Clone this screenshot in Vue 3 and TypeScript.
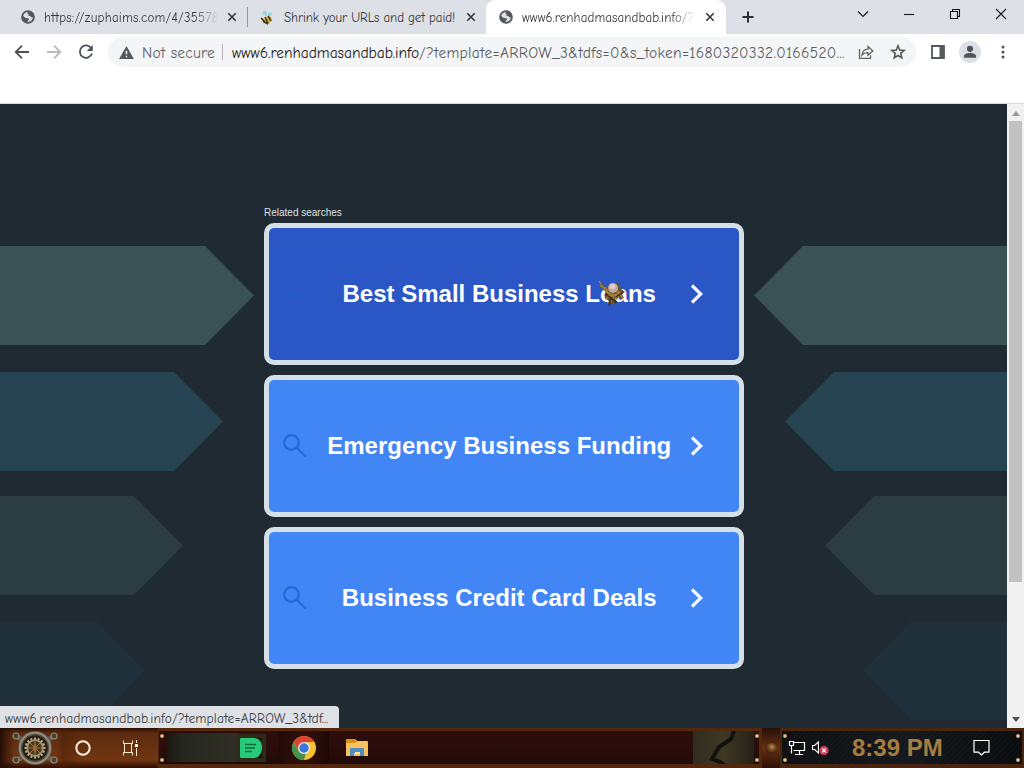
<script setup lang="ts">
interface Tab { title: string; icon: 'globe' | 'bee'; kind: string }
const tabs: Tab[] = [
  { title: 'https://zuphaims.com/4/35578', icon: 'globe', kind: 'first' },
  { title: 'Shrink your URLs and get paid!', icon: 'bee', kind: 'second' },
  { title: 'www6.renhadmasandbab.info/?', icon: 'globe', kind: 'active' },
]
const cards = [
  { label: 'Best Small Business Loans', hover: true },
  { label: 'Emergency Business Funding', hover: false },
  { label: 'Business Credit Card Deals', hover: false },
]
const arrows = [
  { width: 254, color: '#3b5254' },
  { width: 223, color: '#264351' },
  { width: 183, color: '#2b3d41' },
  { width: 145, color: '#1f303b' },
]
const teeth = Array.from({ length: 16 }, (_, i) => i * 22.5)
</script>

<template>
  <div class="screen">
    <header class="tabstrip">
      <div v-for="t in tabs" :key="t.title" class="tab" :class="t.kind">
        <svg v-if="t.icon === 'globe'" class="fav" viewBox="0 0 14 14">
          <circle cx="7" cy="7" r="5.9" fill="#dde0e5" stroke="#54575c" stroke-width="1.9" />
          <path d="M1.5 5.5 4.6 8l2.8.3.8 1.3-1.5 1.2v1.7C3.3 12.5 1 9.5 1.5 5.5ZM7 1.2l-.8 2L7.8 4 7 5.6l2.3.3.8 1.4 2.6.2C13.2 3.8 10.5.8 7 1.2Z" fill="#54575c" />
        </svg>
        <svg v-else class="fav bee" viewBox="0 0 14 14">
          <path d="M3 0c4-1 5 3 4 5C4 5 2 2 3 0M8 2c3-2 5 0 3 3L8 6Z" fill="#9bd5df" />
          <path d="M1 7 5 8l1-2 5-.5L12 9l-3 4-5-.5Z" fill="#e9b72c" />
          <path d="m1 7 4 4M5 6l3 6M8 5l3 5M3 10l5 3" stroke="#39301d" stroke-width="1.5" />
        </svg>
        <span class="tab-title">{{ t.title }}</span>
        <svg class="close" viewBox="0 0 10 10"><path d="m1.3 1.3 7.4 7.4m0-7.4L1.3 8.7" /></svg>
      </div>
      <svg class="plus" viewBox="0 0 12 12"><path d="M6 .5v11M.5 6h11" /></svg>
      <div class="controls">
        <svg width="12" height="12" viewBox="0 0 12 12"><path d="m1 3.5 5 5 5-5" /></svg>
        <svg width="12" height="12" viewBox="0 0 12 12"><path d="M1 6.5h10" /></svg>
        <svg width="12" height="12" viewBox="0 0 12 12"><path d="M1.5 3.5h7v7h-7zM3.5 3.5v-2h7v7h-2" /></svg>
        <svg width="12" height="12" viewBox="0 0 12 12"><path d="m1 1 10 10m0-10L1 11" /></svg>
      </div>
    </header>

    <nav class="toolbar">
      <svg class="nav back" viewBox="0 0 16 16"><path d="M15 8H2m6-6.3L1.7 8 8 14.3" /></svg>
      <svg class="nav fwd" viewBox="0 0 16 16"><path d="M1 8h13M8 1.7 14.3 8 8 14.3" /></svg>
      <svg class="nav reload" viewBox="0 0 16 16"><path d="M13.2 4.1A6.2 6.2 0 1 0 14 9.5" /><path d="M14.8 1v6H8.8Z" class="solid" /></svg>
      <div class="omnibox">
        <svg class="warn" viewBox="0 0 16 14"><path d="M8 0 16 14H0Z" fill="#55585c" /><path d="M8 5v4m0 1.4v1.8" stroke="#f1f3f4" stroke-width="1.6" /></svg>
        <span class="insecure">Not secure</span>
        <i class="sep"></i>
        <span class="url"><b>www6.renhadmasandbab.info</b><span class="path">/?template=ARROW_3&amp;tdfs=0&amp;s_token=1680320332.0166520...</span></span>
        <svg class="share" viewBox="0 0 16 16"><path d="M1.5 5v9.3h11v-3M4 11c.5-4 2.4-5.7 6-5.8V2.5L14.8 7 10 11V8.6C7.2 8.5 5.4 9.2 4 11Z" /></svg>
        <svg class="star" viewBox="0 0 16 16"><path d="m8 1.8 1.7 4.2 4.5.4-3.4 3 1 4.4L8 11.5l-3.8 2.3 1-4.4-3.4-3 4.5-.4Z" /></svg>
      </div>
      <svg class="panel" viewBox="0 0 14 14"><path d="M1 1h12v12H1z" fill="none" stroke="#55585c" stroke-width="1.8" /><path d="M8.5 1H13v12H8.5z" fill="#55585c" /></svg>
      <svg class="avatar" viewBox="0 0 22 22"><circle cx="11" cy="11" r="11" fill="#dce0e6" /><circle cx="11" cy="7.8" r="3.1" fill="#505459" /><path d="M5 16.7v-1.5c0-2 3-3.2 6-3.2s6 1.2 6 3.2v1.5Z" fill="#505459" /></svg>
      <svg class="dots" viewBox="0 0 4 14"><circle cx="2" cy="2" r="1.5" /><circle cx="2" cy="7" r="1.5" /><circle cx="2" cy="12" r="1.5" /></svg>
    </nav>
    <div class="bookmarks"></div>

    <main class="viewport">
      <div class="page">
        <div class="arrows">
          <div v-for="a in arrows" :key="a.width" class="arrow" :style="{ width: a.width + 'px', background: a.color }"></div>
        </div>
        <section class="results">
          <p>Related searches</p>
          <div v-for="c in cards" :key="c.label" class="card" :class="{ hover: c.hover }">
            <svg class="search" viewBox="0 0 24 24"><circle cx="8.5" cy="8.5" r="7.3" /><path d="m14 14 8.5 8.5" /></svg>
            <span class="label">{{ c.label }}</span>
            <svg class="chevron" viewBox="0 0 14 20"><path d="m2 1.5 8.7 8.5L2 18.5" /></svg>
            <svg v-if="c.hover" class="cursor" viewBox="0 0 30 30">
              <path d="m2 1 7 8 3-2 2-3 8 1 2 5 4 3-3 2 2 4-5-1-3 3-2 5-4-2-3-4-2-3 2-4-5-3 2-2-4-3Z" fill="#6b5428" />
              <path d="m2 2 7 11 13 5M3 7l6 2 4 9 12-5M8 20l8-5 2 9M10 24l9-4 2-8 5 8" fill="none" stroke="#a98339" stroke-width="1.3" />
              <path d="m8 15 12 8M12 27l2-9m5 6-7-7m14-4-7 5" fill="none" stroke="#38301f" stroke-width="1.5" />
              <circle cx="16" cy="9" r="5" fill="#c2a9a3" /><circle cx="15.5" cy="7.5" r="2.8" fill="#dfcfc9" />
            </svg>
          </div>
        </section>
        <div class="arrows right">
          <div v-for="a in arrows" :key="a.width" class="arrow" :style="{ width: a.width - 1 + 'px', background: a.color }"></div>
        </div>
      </div>
      <div class="scrollbar">
        <svg viewBox="0 0 8 5"><path d="M0 5 4 0l4 5Z" fill="#9b9b9b" /></svg>
        <div class="thumb"></div>
        <svg viewBox="0 0 8 5"><path d="m0 0 4 5 4-5Z" fill="#505050" /></svg>
      </div>
      <div class="status"><span>www6.renhadmasandbab.info/?template=ARROW_3&amp;tdf...</span></div>
    </main>

    <footer class="taskbar">
      <div class="start">
        <svg class="gear" viewBox="0 0 50 38">
          <path d="m6 7 38 25M44 7 6 32" stroke="#655d4d" stroke-width="5" />
          <g fill="#4a4235" stroke="#8f8672" stroke-width="1.2"><circle cx="6" cy="7" r="3" /><circle cx="44" cy="7" r="3" /><circle cx="6" cy="31" r="3" /><circle cx="44" cy="31" r="3" /></g>
          <circle cx="25" cy="19" r="17" fill="#5b5346" /><circle cx="25" cy="19" r="15.2" fill="none" stroke="#958c7a" stroke-width="2" />
          <circle cx="25" cy="19" r="12.8" fill="#252016" />
          <g stroke="#c0af8a" stroke-width="2"><path v-for="a in teeth" :key="a" d="M25 8.5v4" :transform="`rotate(${a} 25 19)`" /></g>
          <circle cx="25" cy="19" r="7.8" fill="#493820" stroke="#a3916d" stroke-width="1.8" />
          <path d="M25 12v14M18 19h14m-12-5 10 10m0-10L20 24" stroke="#8d754a" /><ellipse cx="25" cy="19" rx="1.7" ry="4" fill="#a9642a" />
        </svg>
        <svg class="cortana" viewBox="0 0 16 16"><circle cx="8" cy="8" r="6.7" /></svg>
        <svg class="taskview" viewBox="0 0 17 16"><path d="M1.5.5v3h9v-3m-9 15v-3h9v3M2.5 3.5v9m7-9v9M14.5 0v3m0 5v8" /><path d="M13 4h3v3h-3z" fill="#fff1d4" stroke="none" /></svg>
      </div>
      <div class="tasks">
        <i class="rivets"></i>
        <div class="glass"></div>
        <svg class="note" viewBox="0 0 22 20"><path d="M1 0h13c5 0 8 4 8 9.5S19 20 14 20H1Q0 20 0 19V1Q0 0 1 0Z" fill="#27ca79" /><path d="M5 6.5h11M5 10h10M5 13.5h7" stroke="#156b3d" stroke-width="1.5" /></svg>
        <div class="chrome-button">
          <svg viewBox="0 0 24 24"><circle cx="12" cy="12" r="12" fill="#f6c232" /><path d="M1.6 6A12 12 0 0 1 22.4 6H12L6.8 15Z" fill="#df4135" /><path d="M1.6 6 6.8 15l7 2.5L12 24A12 12 0 0 1 1.6 6Z" fill="#41934d" /><circle cx="12" cy="12" r="6" fill="#eee9e5" /><circle cx="12" cy="12" r="4.7" fill="#3777db" /></svg>
        </div>
        <svg class="folder" viewBox="0 0 22 19"><path d="M0 1h9l2 2h10q1 0 1 1v14H0Z" fill="#f6c15f" /><path d="M0 1h9l2 2-2 2H0Z" fill="#d99119" /><path d="M4 18v-7q0-1 1-1h12q1 0 1 1v7h-4v-3H8v3Z" fill="#4f8cc0" /><path d="M9 14h5v2H9z" fill="#ffe1a0" /></svg>
        <div class="end-glass"><svg viewBox="0 0 66 36"><path d="M41 0 38 8 26 16 19 28l8 3 7 5" fill="none" stroke="#11120e" stroke-width="4" /></svg></div>
        <i class="rivets"></i>
      </div>
      <div class="joint"><i></i></div>
      <div class="tray">
        <i class="rivets"></i>
        <svg class="network" viewBox="0 0 17 14"><path d="M4.5 1.5h11v8h-11M.5.5h4v4h-4zM2.5 4.5v8m8-3v4M6 13.5h8" /></svg>
        <svg class="sound" viewBox="0 0 17 16"><path d="M.6 5.5h2L6.4 2v11L2.6 9.5h-2Z" fill="none" stroke="#fff" stroke-width="1.1" /><circle cx="12" cy="10.5" r="4.7" fill="#cd3655" /><path d="m10 8.5 4 4m0-4-4 4" stroke="#fff" stroke-width="1.2" /></svg>
        <span class="clock">8:39 PM</span>
        <svg class="notice" viewBox="0 0 17 17"><path d="M1 1.5h15v11.7h-4.5l-3 2.8-3-2.8H1Z" /></svg>
        <i class="rivets last"></i>
      </div>
    </footer>
  </div>
</template>

<style>
body { margin: 0; overflow: hidden; }
</style>
<style scoped>
* { box-sizing: border-box; }
svg { display: block; flex: none; overflow: visible; }
.screen { width: 1024px; height: 768px; display: flex; flex-direction: column; overflow: hidden; background: #fff; font-family: "Comic Sans MS", "Comic Neue", "Noto Sans", sans-serif; }
.tabstrip { height: 34px; background: #dde0e6; display: flex; flex: none; color: #36393d; }
.tab { display: flex; align-items: center; padding: 0 10px 0 21px; width: 248px; height: 34px; }
.tab.first { border-right: 1px solid #94979c; border-image: linear-gradient(transparent 8px, #94979c 8px 26px, transparent 26px) 1; }
.tab.second { width: 238px; padding-left: 12px; }
.tab.active { width: 240px; padding: 0 11px 0 13px; background: #fff; border-radius: 9px 9px 0 0; }
.fav { width: 14px; height: 14px; margin-right: 9px; }
.bee { margin-top: 2px; margin-right: 10px; }
.tab-title { font-size: 13px; line-height: 20px; padding-top: 2px; width: 174px; overflow: hidden; white-space: nowrap; letter-spacing: -.13px; }
.first .tab-title { letter-spacing: .25px; }
.active .tab-title { letter-spacing: .08px; }
.first .tab-title, .active .tab-title { mask-image: linear-gradient(90deg, #000 86%, transparent); }
.close { width: 10px; height: 10px; margin-left: auto; fill: none; stroke: #33363a; stroke-width: 1.6; }
.plus { width: 12px; height: 12px; margin: 11px 0 0 16px; stroke: #292c30; stroke-width: 2; }
.controls { display: flex; gap: 34px; margin: 8px 0 0 103px; }
.controls svg { fill: none; stroke: #15171a; stroke-width: 1.1; }
.toolbar { height: 36px; display: flex; align-items: center; flex: none; padding-left: 14px; }
.nav { width: 16px; height: 16px; fill: none; stroke: #4e5155; stroke-width: 1.8; }
.fwd { margin-left: 16px; stroke: #babcbf; }
.reload { margin-left: 16px; }
.solid { fill: #4e5155; stroke: none; }
.omnibox { height: 30px; width: 808px; margin-left: 14px; border-radius: 16px; background: #f4f5f6; display: flex; align-items: center; padding-left: 11px; }
.warn { width: 15px; height: 13px; }
.insecure { width: 74px; padding-top: 2px; margin-left: 8px; color: #5e6165; font-size: 15.5px; white-space: nowrap; letter-spacing: .2px; }
.sep { height: 16px; width: 1px; background: #b5b7ba; margin: 0 9px 0 6px; }
.url { font-size: 15.5px; padding-top: 2px; width: 614px; display: flex; white-space: nowrap; color: #5b5e62; }
.url b { font-weight: 400; color: #202124; width: 187px; letter-spacing: -.04px; }
.path { letter-spacing: .3px; }
.share { width: 16px; height: 16px; margin-left: 12px; fill: none; stroke: #606367; stroke-width: 1.3; }
.star { width: 16px; height: 16px; margin-left: 16px; fill: none; stroke: #55585c; stroke-width: 1.6; }
.panel { width: 14px; height: 14px; margin-left: 15px; }
.avatar { width: 22px; height: 22px; margin-left: 14px; }
.dots { width: 4px; height: 14px; margin-left: 20px; fill: #505357; }
.bookmarks { height: 34px; border-bottom: 1px solid #d7d9db; flex: none; }
.viewport { height: 624px; position: relative; display: flex; flex: none; }
.page { width: 1007px; background: #1f2a32; display: grid; grid-template-columns: 264px 480px 263px; }
.arrows { padding-top: 142px; display: flex; flex-direction: column; gap: 25px; }
.arrow { height: 99px; clip-path: polygon(0 0, calc(100% - 49px) 0, 100% 50%, calc(100% - 49px) 100%, 0 100%); }
.arrow:first-child { margin-bottom: 2px; }
.arrow:nth-child(3) { margin-bottom: 1px; }
.right { align-items: flex-end; }
.right .arrow { clip-path: polygon(49px 0, 100% 0, 100% 100%, 49px 100%, 0 50%); }
.results { padding-top: 101px; display: flex; flex-direction: column; gap: 10px; font-family: "Liberation Sans", Arial, sans-serif; }
.results p { margin: 0 0 -6px; height: 14px; font-size: 10px; line-height: 15px; color: #dce3e6; }
.card { position: relative; height: 142px; border: 5px solid #d5dfe7; border-radius: 10px; background: #4285f4; display: flex; align-items: center; padding: 0 35px 0 14px; }
.card.hover { background: #2a56c6; }
.search { width: 24px; height: 24px; fill: none; stroke: #1967d2; stroke-width: 2.3; opacity: .85; }
.hover .search { opacity: .4; }
.label { flex: 1; text-align: center; font-size: 24px; font-weight: 700; color: #fff; white-space: nowrap; padding-left: 1.5px; }
.chevron { width: 14px; height: 20px; fill: none; stroke: #f3f7ff; stroke-width: 3.2; }
.cursor { position: absolute; left: 328px; top: 51px; width: 30px; height: 30px; }
.scrollbar { width: 17px; background: #f1f1f1; display: flex; flex-direction: column; align-items: center; padding: 7px 0 6px; }
.scrollbar svg { width: 8px; height: 5px; }
.thumb { height: 461px; width: 13px; background: #c1c1c1; margin: 5px 0 auto; }
.status { position: absolute; left: 0; bottom: 0; width: 339px; height: 22px; background: #dee1e6; border-radius: 0 4px 0 0; padding-left: 5px; font-size: 13.5px; letter-spacing: .12px; line-height: 25px; color: #3c3f43; white-space: nowrap; }
.taskbar { height: 40px; flex: none; display: flex; background: #250a03; }
.start { width: 158px; display: flex; align-items: center; padding-left: 10px; background: linear-gradient(90deg, #240d04 0, transparent 9%), linear-gradient(90deg, transparent 36%, #4a1d0880 40%, transparent 52%), linear-gradient(#2a0f05, #5c2b0f 5px, #713611 32px, #321104 39px); }
.gear { width: 50px; height: 38px; }
.cortana { width: 16px; height: 16px; margin-left: 15px; fill: none; stroke: #fff1e2; stroke-width: 2; }
.taskview { width: 17px; height: 16px; margin-left: 31px; fill: none; stroke: #fff1d4; stroke-width: 1; }
.tasks { width: 604px; height: 40px; display: flex; align-items: center; border: solid #54280f; border-width: 3px 3px 4px 1px; background: linear-gradient(#2c0e0c, #2b0c0a 50%, #200b09); }
.rivets { width: 4px; height: 28px; margin-left: 1px; flex: none; background: radial-gradient(circle at 2px 2px, #e0c49a 0 1px, #82633c 2px, transparent 2.3px), radial-gradient(circle at 2px 26px, #e0c49a 0 1px, #82633c 2px, transparent 2.3px); }
.glass { width: 72px; height: 29px; margin-left: 3px; background: linear-gradient(90deg, #191710, #25271f 20%, #302f25); }
.note { width: 22px; height: 20px; margin-left: 1px; outline: 4px solid #302a1b; }
.chrome-button { width: 50px; height: 32px; margin-left: 17px; padding: 4px 13px; background: linear-gradient(90deg, #1f0b08, #351009 50%, #1c0907); }
.chrome-button svg { width: 24px; height: 24px; }
.folder { width: 22px; height: 19px; margin-left: 17px; }
.end-glass { width: 61px; height: 33px; margin-left: auto; background: linear-gradient(90deg, #302c20, #3e3823, #242319); overflow: hidden; }
.end-glass svg { width: 66px; height: 36px; }
.joint { width: 18px; display: grid; place-items: center; background: linear-gradient(#27100a, #652d12 50%, #2b1006); }
.joint i { width: 11px; height: 11px; border-radius: 50%; background: radial-gradient(circle at 6px 4px, #c29563, #805328 30%, #42220d 70%); }
.tray { width: 244px; display: flex; align-items: center; background: repeating-linear-gradient(135deg, #ffffff05 0 1px, transparent 1px 4px), linear-gradient(90deg, #0e1012, #15191d 50%, #0a0c0d); border: solid #49250f; border-width: 3px 2px 4px; }
.network { width: 17px; height: 14px; margin-left: 2px; fill: none; stroke: #fff; stroke-width: 1.2; }
.sound { width: 17px; height: 16px; margin-left: 6px; }
.clock { width: 91px; margin-left: 23px; font: 700 24px/34px "Liberation Sans", Arial, sans-serif; color: #a77d42; white-space: nowrap; }
.notice { width: 17px; height: 17px; margin-left: 30px; fill: none; stroke: #fff; stroke-width: 1.2; }
.last { margin-left: auto; margin-right: 2px; }
</style>
